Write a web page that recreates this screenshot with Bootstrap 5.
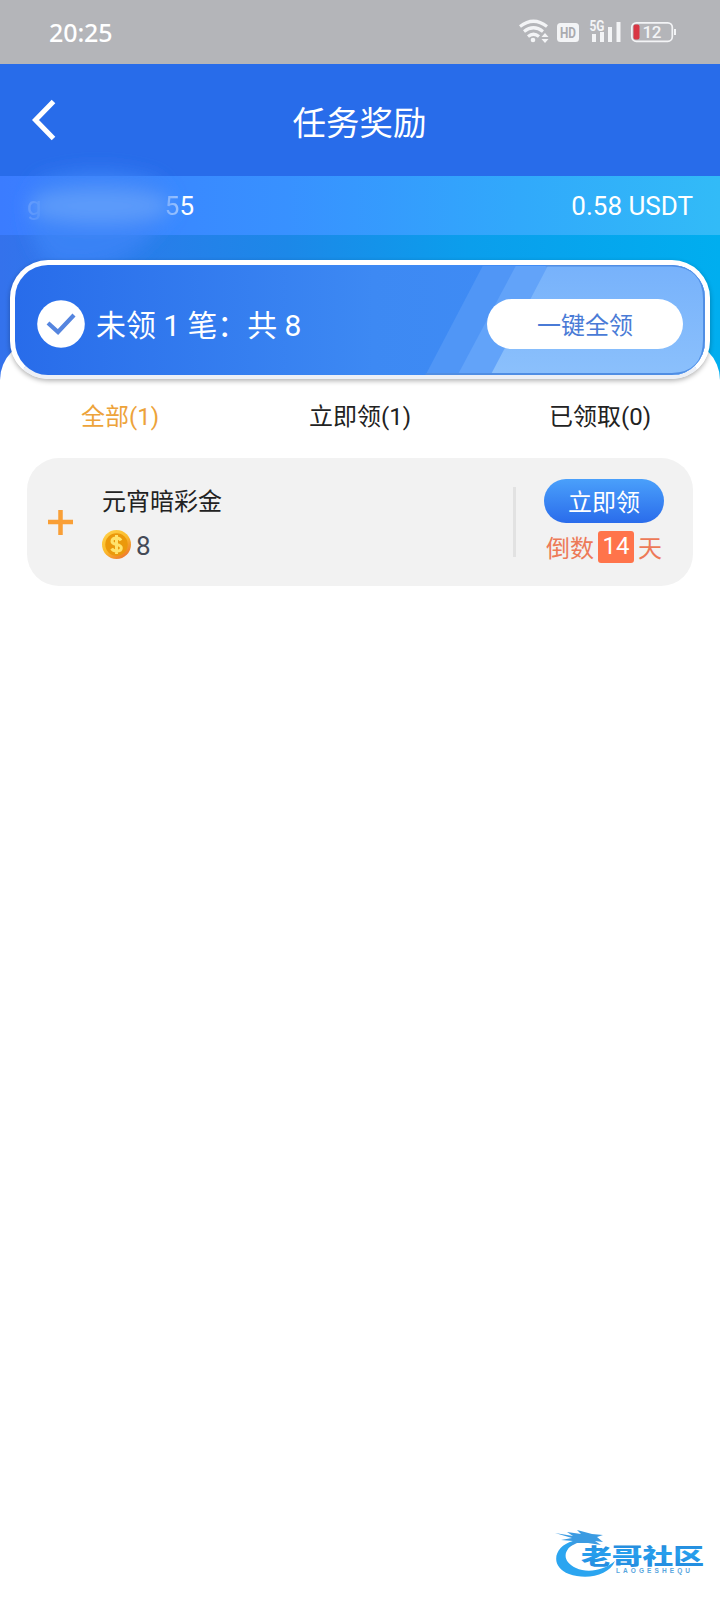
<!DOCTYPE html>
<html lang="zh-CN">
<head>
<meta charset="utf-8">
<meta name="viewport" content="width=device-width, initial-scale=1">
<title>任务奖励</title>
<link href="https://cdn.jsdelivr.net/npm/bootstrap@5.3.0/dist/css/bootstrap.min.css" rel="stylesheet">
<style>
body{font-family:Roboto,"Noto Sans CJK SC",sans-serif;font-size:24px;line-height:1;color:#222;background:#fff}
svg{display:block;flex:none}
.app{width:720px;height:1600px;overflow:hidden}
.status{height:64px;background:#b4b5b9;padding:0 44px 0 49px}
.clock{font-family:"Noto Sans",sans-serif;font-size:25px;font-weight:500;letter-spacing:-.1px}
.topbar{height:112px;background:#286cea;display:grid;grid-template-columns:110px 1fr 110px}
.topbar h1{font-size:33.5px;font-weight:400;margin:8px 1px 0 0}
.hero{height:204px;background:linear-gradient(90deg,#3472ec,#1c88e8 40%,#0b9eec 65%,#00aeef)}
.account{height:59px;padding:0 27px;background:linear-gradient(90deg,#3b7cff,#3891ff 40%,#31a9fb 72%,#32bbf7);font-size:26px}
.masked{width:167px}
.smudge{left:18px;top:-16px;width:168px;height:105px}
.sheet{margin-top:-40px;border-radius:40px 40px 0 0;background:#fff}
.summary{margin:-80px 10px 0;height:119px;border:5.5px solid #fff;border-bottom:4px solid #edf0f6;border-radius:38px;background:linear-gradient(90deg,#286cea,#3d89f3 52%,#428ff7);box-shadow:0 2px 5px rgba(0,0,0,.3);padding:7px 22px 0}
.sheen{inset:0;width:100%;height:100%}
.summary-text{font-size:29.9px;margin:5px 0 0 11px;white-space:pre}
.claim-all{width:196px;height:50px;background:#fff;color:#4a7bd6;padding-top:4px}
.tabs{height:79px;padding-bottom:4px}
.tab-on{color:#eda33a}
.reward{margin:0 27px;height:128px;border-radius:32px;background:#f2f2f2;padding-left:21px}
.reward-main{margin-left:29px;gap:15px;padding-top:5px}
.amount{font-size:26px;color:#444a56;gap:5px}
.sep{width:3px;height:70px;background:#e2e2e2}
.actions{width:177px;gap:8px;padding-right:1px;padding-bottom:2px}
.claim{width:120px;height:44px;color:#fff;background:linear-gradient(#4aa0fb,#2a6ceb);padding-top:4px}
.countdown{color:#ed7a58;gap:4px}
.cn{margin-top:4px}
.days{width:36px;height:32px;border-radius:3px;background:#ff744b;color:#fff;padding-bottom:3px}
.watermark{right:16px;bottom:20px}
</style>
</head>
<body>
<div class="app position-relative">
  <div class="status d-flex align-items-center justify-content-between text-white">
    <span class="clock">20:25</span>
    <svg width="158" height="30" viewBox="518 17 158 30" fill="none" stroke="#f3f4f6">
      <g stroke-width="3.2"><path d="M520 26.500Q533.500 16 547 26.500M524 31.500Q533.500 24 543 31.500M528 36.500Q533.500 32 539 36.500"/></g>
      <circle cx="533" cy="40" r="2.300" fill="#f3f4f6" stroke="none"/>
      <path d="M541.500 37L545 33L548.500 37ZM541.500 39L545 43L548.500 39Z" fill="#f3f4f6" stroke="none"/>
      <rect x="557" y="23" width="22" height="19" rx="3.500" fill="#f3f4f6" stroke="none"/>
      <g font-family="Roboto, sans-serif" font-weight="700" stroke="none">
        <text x="560" y="37.500" font-size="14.500" fill="#aaabaf" textLength="16" lengthAdjust="spacingAndGlyphs">HD</text>
        <text x="589.500" y="31" font-size="14" fill="#f3f4f6" textLength="15" lengthAdjust="spacingAndGlyphs">5G</text>
        <text x="642.500" y="38" font-size="17" fill="#f3f4f6" font-weight="500" textLength="19">12</text>
      </g>
      <path d="M594 34V42M602 32V42M610 27V42M618.500 22V42" stroke-width="4"/>
      <rect x="631.800" y="22.800" width="40.500" height="18.500" rx="4.500" stroke-width="1.700"/>
      <rect x="633.500" y="24.500" width="6" height="15" rx="2" fill="#d93644" stroke="none"/>
      <path d="M675 29V35" stroke-width="2"/>
    </svg>
  </div>
  <header class="topbar text-white align-items-center">
    <svg width="60" height="44" viewBox="0 0 60 44" fill="none" stroke="#fff" stroke-width="5"><path d="M53.500 3.500L35.500 22L53.500 40.500"/></svg>
    <h1 class="text-center">任务奖励</h1>
  </header>
  <section class="hero">
    <div class="account position-relative d-flex align-items-center justify-content-between text-white">
      <span class="masked d-flex justify-content-between"><span class="opacity-25">g</span><span><span class="opacity-50">5</span>5</span></span>
      <span>0.58 USDT</span>
      <svg class="smudge position-absolute" viewBox="0 0 168 105" overflow="visible" aria-hidden="true">
        <defs><filter id="soft" x="-30%" y="-50%" width="160%" height="200%"><feGaussianBlur stdDeviation="9"/></filter></defs>
        <g filter="url(#soft)"><path d="M20 20Q80 0 140 20Q160 48 130 80Q95 112 45 108Q14 102 10 50Z" fill="#3f86f8" opacity=".75"/><ellipse cx="82" cy="46" rx="72" ry="17" fill="#67a3f9" opacity=".75"/></g>
      </svg>
    </div>
  </section>
  <main class="sheet position-relative">
    <div class="d-flex flex-column">
      <section class="summary position-relative d-flex align-items-center text-white overflow-hidden">
        <svg class="sheen position-absolute" viewBox="0 0 689 109" preserveAspectRatio="none" aria-hidden="true">
          <defs><linearGradient id="sheen" x2="0" y2="1"><stop stop-color="#77b2fb"/><stop offset="1" stop-color="#8bc0fc"/></linearGradient></defs>
          <path d="M467 1H689V109H410Z" fill="#5096f6"/><path d="M500 1H689V109H442Z" fill="#62a3f9"/><path d="M532 1H689V109H475Z" fill="url(#sheen)"/>
          <path d="M530 .500H656Q688 2 688 34V74Q688 107 656 108H410" fill="none" stroke="#508ee4" stroke-width="2"/>
        </svg>
        <svg class="position-relative" width="48" height="48" viewBox="0 0 48 48"><circle cx="24" cy="24" r="23.800" fill="#fff"/><path d="M11 23L21 32L37 15" fill="none" stroke="#5585df" stroke-width="4.200"/></svg>
        <span class="summary-text position-relative">未领 1 笔：共 8</span>
        <span class="claim-all position-relative ms-auto rounded-pill d-flex align-items-center justify-content-center">一键全领</span>
      </section>
      <nav class="tabs row g-0 align-items-center text-center">
        <span class="col tab-on">全部(1)</span><span class="col">立即领(1)</span><span class="col">已领取(0)</span>
      </nav>
      <article class="reward d-flex align-items-center">
        <svg width="25" height="25" viewBox="0 0 25 25" stroke="#f99f36" stroke-width="4.500"><path d="M0 12H25M12.500 0V25"/></svg>
        <div class="reward-main d-flex flex-column flex-fill">
          <span>元宵暗彩金</span>
          <span class="amount d-flex align-items-center">
            <svg width="29" height="29" viewBox="0 0 29 29"><defs><linearGradient id="gold" x2=".7" y2="1"><stop stop-color="#ffd34d"/><stop offset=".55" stop-color="#fbbc2d"/><stop offset="1" stop-color="#ee7a2c"/></linearGradient></defs><circle cx="14.500" cy="14.500" r="14.500" fill="url(#gold)"/><circle cx="14.500" cy="14.500" r="11.200" fill="#eb990b"/><path d="M14.500 5V24M19 10.500Q17.500 8 14.500 8Q10 8 10 11.200Q10 13.600 14.500 14.400Q19.300 15.400 19.300 18Q19.300 21 14.500 21Q11 21 9.700 18.500" fill="none" stroke="#ffe36c" stroke-width="3"/></svg><span class="pt-1">8</span>
          </span>
        </div>
        <div class="sep"></div>
        <div class="actions d-flex flex-column align-items-center">
          <span class="claim rounded-pill d-flex align-items-center justify-content-center">立即领</span>
          <span class="countdown d-flex align-items-center"><span class="cn">倒数</span><span class="days d-flex align-items-center justify-content-center">14</span><span class="cn">天</span></span>
        </div>
      </article>
    </div>
  </main>
  <svg class="watermark position-absolute" width="152" height="52" viewBox="552 1528 152 52" role="img">
    <defs><linearGradient id="brand" x1="0" y1="0" x2="0" y2="1"><stop stop-color="#2376c9"/><stop offset=".45" stop-color="#27a0ee"/><stop offset="1" stop-color="#2388dc"/></linearGradient></defs>
    <path d="M573 1541C554 1546 549 1566 569 1574C586 1580 609 1576 615 1561C603 1571 587 1573 576 1568C561 1561 563 1549 577 1542Z" fill="#2ba5f0"/>
    <path d="M555 1533L573 1536L567 1532L581 1534L577 1530L592 1534L603 1535L597 1537L603 1542L595 1541L601 1545L588 1543L577 1543L569 1547L573 1541L561 1540L572 1538Z" fill="#3b9be2"/>
    <text x="581" y="1563.500" font-family="Noto Sans CJK SC, sans-serif" font-size="21.500" font-weight="900" fill="url(#brand)" textLength="123" lengthAdjust="spacingAndGlyphs">老哥社区</text>
    <text x="616" y="1572.500" font-family="Liberation Sans, sans-serif" font-size="6.500" font-weight="700" fill="#58a5de" textLength="74">LAOGESHEQU</text>
  </svg>
</div>
<script src="https://cdn.jsdelivr.net/npm/bootstrap@5.3.0/dist/js/bootstrap.bundle.min.js"></script>
</body>
</html>
